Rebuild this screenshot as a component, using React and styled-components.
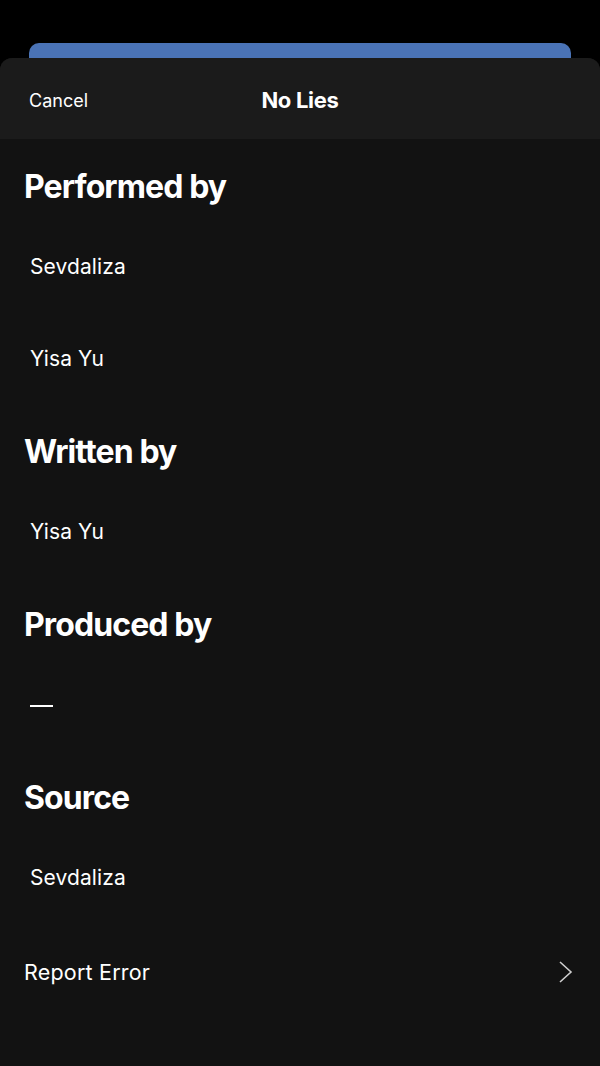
import styled, { createGlobalStyle } from "styled-components";

const Global = createGlobalStyle`
  html, body {
    margin: 0;
    padding: 0;
    background: #000;
  }
  body {
    font-family: "Inter", "Liberation Sans", sans-serif;
    color: #fff;
    -webkit-font-smoothing: antialiased;
  }
`;

const Screen = styled.div`
  width: 600px;
  height: 1066px;
  background: #000;
  display: flex;
  flex-direction: column;
  overflow: hidden;
  padding-top: 43px;
  box-sizing: border-box;
`;

const BehindCard = styled.div`
  margin: 0 29px;
  height: 15px;
  flex-shrink: 0;
  background: #4a73b6;
  border-radius: 10px 10px 0 0;
`;

const Sheet = styled.div`
  flex: 1;
  background: #121212;
  border-radius: 12px 12px 0 0;
  overflow: hidden;
  display: flex;
  flex-direction: column;
`;

const Header = styled.div`
  height: 81px;
  background: #1b1b1b;
  display: grid;
  grid-template-columns: 1fr auto 1fr;
  align-items: center;
  padding: 0 29px;
  flex-shrink: 0;
`;

const Cancel = styled.span`
  font-size: 18px;
  color: #fff;
  justify-self: start;
  padding-top: 4px;
`;

const Title = styled.h1`
  margin: 0;
  font-size: 22px;
  font-weight: 700;
  letter-spacing: -0.3px;
  padding-top: 2px;
`;

const Section = styled.section`
  padding-top: 13px;
  display: flex;
  flex-direction: column;
`;

const Heading = styled.h2`
  margin: 0;
  height: 68px;
  display: flex;
  align-items: center;
  padding-left: 24px;
  font-size: 32px;
  font-weight: 700;
  letter-spacing: -0.9px;
`;

const Item = styled.div`
  height: 92px;
  display: flex;
  align-items: center;
  padding-left: 30px;
  padding-top: 1px;
  box-sizing: border-box;
  font-size: 21px;
  letter-spacing: 0.1px;
  color: #fff;
`;

const Dash = styled.span`
  display: block;
  width: 23px;
  height: 2px;
  margin-top: 3px;
  background: #fff;
`;

const ReportRow = styled.div`
  height: 92px;
  display: flex;
  align-items: center;
  justify-content: space-between;
  padding: 6px 26px 0 24px;
  box-sizing: border-box;
  font-size: 21.5px;
  letter-spacing: 0.2px;
`;

const sections = [
  { title: "Performed by", items: ["Sevdaliza", "Yisa Yu"] },
  { title: "Written by", items: ["Yisa Yu"] },
  { title: "Produced by", items: [null] },
  { title: "Source", items: ["Sevdaliza"] },
];

export default function App() {
  return (
    <>
      <Global />
      <Screen>
        <BehindCard />
        <Sheet>
          <Header>
            <Cancel>Cancel</Cancel>
            <Title>No Lies</Title>
            <span />
          </Header>
          {sections.map((s) => (
            <Section key={s.title}>
              <Heading>{s.title}</Heading>
              {s.items.map((it, i) => (
                <Item key={i}>{it === null ? <Dash /> : it}</Item>
              ))}
            </Section>
          ))}
          <ReportRow>
            <span>Report Error</span>
            <svg width="16" height="22" viewBox="0 0 16 22" fill="none">
              <path d="M2 1 L13 11 L2 21" stroke="#cfcfcf" strokeWidth="1.6" />
            </svg>
          </ReportRow>
        </Sheet>
      </Screen>
    </>
  );
}
